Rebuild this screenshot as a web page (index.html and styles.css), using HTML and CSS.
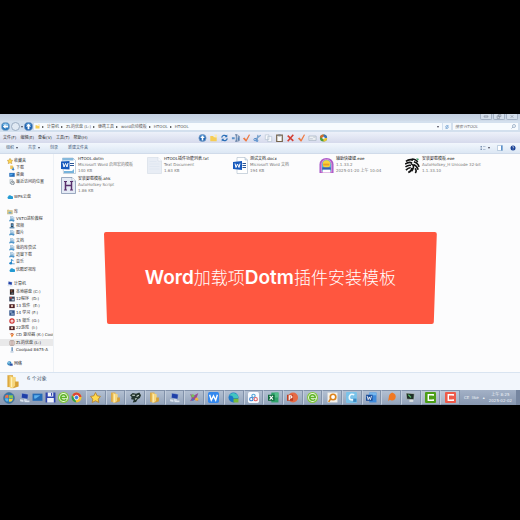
FILE: index.html
```
<!DOCTYPE html>
<html lang="zh-CN">
<head>
    <meta charset="UTF-8">
    <meta name="viewport" content="width=device-width, initial-scale=1.0">
    <title>HTOOL</title>
    <link rel="stylesheet" href="styles.css">
</head>
<body>

    <!-- Shared icons -->
    <svg class="sprite" aria-hidden="true">
        <symbol id="i-back" viewBox="0 0 20 20"><circle cx="10" cy="10" r="9" fill="#2878bd" stroke="#8fb0ce" stroke-width="2"/><path d="M3 7a8 8 0 0 1 14 0z" fill="#8cc5ec"/><path d="M10 5l-6 5 6 5v-3h6V8h-6z" fill="#fff"/></symbol>
        <symbol id="i-up" viewBox="0 0 20 20"><circle cx="10" cy="10" r="9" fill="#1d63b0" stroke="#7d9fc8" stroke-width="2"/><path d="M4 6a8 8 0 0 1 12 0z" fill="#7ebcec"/><path d="M10 4l-6 6h4v6h4v-6h4z" fill="#fff"/></symbol>
        <symbol id="i-folder" viewBox="0 0 20 20"><path d="M2 1h8v17H2z" fill="#dda93f"/><path d="M5 2l9 2v13l-7 3-2-2z" fill="#f6d67c"/><path d="M13 10h5v7l-9 3 4-4z" fill="#d6a136"/><path d="M8 4v14" stroke="#fff3c0" stroke-width="1.5"/></symbol>
        <symbol id="i-new" viewBox="0 0 20 20"><path d="M2 5h7l2 3h7v10H2z" fill="#f6cd55"/><path d="M12 1h7v7h-5z" fill="#fbeab0"/></symbol>
        <symbol id="i-sync" viewBox="0 0 20 20"><path d="M3 9c1-6 8-7 12-4M17 11c-1 6-8 7-12 4" fill="none" stroke="#2c70b8" stroke-width="3"/><path d="M17 1v7h-7zM3 19v-7h7z" fill="#2c70b8"/></symbol>
        <symbol id="i-rename" viewBox="0 0 20 20"><path d="M1 8h7v5H1zM15 8h4v7h-4z" fill="#5b91c8"/><path d="M9 2h6M12 2v16M9 18h6M15 5h4v12h-4" fill="none" stroke="#42658f" stroke-width="2"/></symbol>
        <symbol id="i-check" viewBox="0 0 20 20"><path d="M1 11l4-2 4 5L16 1l3 1-9 17H8z" fill="#ee7a43"/></symbol>
        <symbol id="i-cut" viewBox="0 0 20 20"><path d="M5 13L18 3M9 16l2-14" stroke="#7aa3cc" stroke-width="3"/><circle cx="4" cy="14" r="3" fill="none" stroke="#3d7fc6" stroke-width="2"/><circle cx="9" cy="17" r="2" fill="none" stroke="#3d7fc6" stroke-width="2"/></symbol>
        <symbol id="i-copy" viewBox="0 0 20 20"><path d="M2 2h9v12H2zM8 6h10v13H8z" fill="#f7f9fc" stroke="#aebdcd" stroke-width="1.5"/></symbol>
        <symbol id="i-paste" viewBox="0 0 20 20"><path d="M3 3h14v16H3z" fill="#fafafa" stroke="#75654e" stroke-width="3"/><path d="M7 1h6v5H7z" fill="#80868e"/></symbol>
        <symbol id="i-del" viewBox="0 0 20 20"><path d="M3 4l14 13M17 2L3 18" stroke="#d34035" stroke-width="4"/></symbol>
        <symbol id="i-mail" viewBox="0 0 20 20"><path d="M1 5h18v11H1z" fill="#edf0f3" stroke="#9ba9b8" stroke-width="1.5"/><path d="M12 8h5M3 12h8" stroke="#b6bfcb" stroke-width="2"/></symbol>
        <symbol id="i-win" viewBox="0 0 20 20"><circle cx="10" cy="10" r="9" fill="#2f77b1" stroke="#496986"/><path d="M4 6q3-2 5-1v5q-3-1-6 0z" fill="#ed744b"/><path d="M10 5q3 1 6 0l1 5q-4 1-7 0z" fill="#8ac84e"/><path d="M3 11q3-1 6 0v5q-3-1-4 0z" fill="#5bb7ec"/><path d="M10 11q3 1 7 0l-2 4q-2 2-5 1z" fill="#f7d445"/></symbol>
        <symbol id="i-options" viewBox="0 0 20 20"><circle cx="10" cy="10" r="9" fill="#4d9b3f"/><path d="M10 1a9 9 0 0 1 9 9h-9z" fill="#3e71b9"/><path d="M19 10a9 9 0 0 1-9 9v-9z" fill="#f2c632"/><path d="M10 1a9 9 0 0 0-9 8l9 1z" fill="#d96b2e"/><circle cx="10" cy="10" r="3" fill="#e9edf2"/></symbol>
        <symbol id="i-star" viewBox="0 0 20 20"><path d="M10 1l3 6 6 1-4 5 1 6-6-3-6 3 1-6-4-5 6-1z" fill="#ffd94e" stroke="#b5802a" stroke-width="1.5"/></symbol>
        <symbol id="i-down" viewBox="0 0 20 20"><path d="M4 2h8l2 3v8H4z" fill="#f1c75d"/><path d="M12 8v5H8l6 6 5-6h-3V8z" fill="#3a82c7"/></symbol>
        <symbol id="i-desk" viewBox="0 0 20 20"><path d="M1 3h18v13H1z" fill="#246cb9"/><path d="M4 6h11l-8 6H4z" fill="#5db1ef"/></symbol>
        <symbol id="i-recent" viewBox="0 0 20 20"><path d="M3 1h9v14H3z" fill="#dde5ea" stroke="#7c8a95"/><circle cx="12" cy="13" r="6" fill="#eef4f8" stroke="#50606e" stroke-width="2"/><path d="M12 9v4h4" fill="none" stroke="#333" stroke-width="1.5"/></symbol>
        <symbol id="i-cloud" viewBox="0 0 20 20"><path d="M5 17a5 5 0 0 1-1-9 6 6 0 0 1 11-1 5 5 0 0 1 1 10z" fill="#249bd3"/></symbol>
        <symbol id="i-lib" viewBox="0 0 20 20"><path d="M1 3h6l2 2h9v12H1z" fill="#e7cf83" stroke="#a69155"/><path d="M5 9h10v6H5z" fill="#6ba9d2"/></symbol>
        <symbol id="i-shelf" viewBox="0 0 20 20"><path d="M5 1h7l4 4v9H5z" fill="#e6f1fa" stroke="#5991bd" stroke-width="1.5"/><path d="M1 13q9-5 18 2l-3 4q-8-4-15-1z" fill="#4f96ca"/><path d="M7 6h5M7 9h7" stroke="#3c80b5" stroke-width="1.5"/></symbol>
        <symbol id="i-video" viewBox="0 0 20 20"><path d="M6 1h9v13H6z" fill="#29445e"/><path d="M8 4h5v6H8z" fill="#5c9dcc"/><path d="M2 14h16v4H2z" fill="#477da8"/></symbol>
        <symbol id="i-music" viewBox="0 0 20 20"><path d="M8 1v12M8 2l7 4" stroke="#2386c9" stroke-width="3"/><ellipse cx="6" cy="14" rx="5" ry="4" fill="#2386c9"/><path d="M11 16h8" stroke="#5b9cc9" stroke-width="3"/></symbol>
        <symbol id="i-pc" viewBox="0 0 20 20"><path d="M5 2l12 2-1 9-12-2z" fill="#1e3fa8" stroke="#b6c6dd"/><path d="M9 13h5v3H9zM2 13l6 1v4l-6-1z" fill="#dbe4ee"/><path d="M10 17h9" stroke="#dbe4ee" stroke-width="3"/></symbol>
        <symbol id="i-disk" viewBox="0 0 20 20"><path d="M3 1h14v18H3z" fill="#302421"/><path d="M6 4h5v5H6z" fill="#9a5b43"/><path d="M8 12h7v4H8z" fill="#6f7d8c"/></symbol>
        <symbol id="i-disk2" viewBox="0 0 20 20"><path d="M1 2h18v16H1z" fill="#33435c"/><path d="M3 4h7v4H3z" fill="#cf4d3c"/><path d="M9 9h8v6H9z" fill="#b8c6d8"/></symbol>
        <symbol id="i-disk3" viewBox="0 0 20 20"><path d="M1 4h18v13H1z" fill="#4a1d22"/><circle cx="10" cy="10" r="4" fill="#d8b6a5"/></symbol>
        <symbol id="i-disk4" viewBox="0 0 20 20"><path d="M1 1h18v18H1z" fill="#31548a"/><path d="M3 5h8v3H3zM7 12h9v3H7z" fill="#b9d0e7"/></symbol>
        <symbol id="i-ring" viewBox="0 0 20 20"><circle cx="10" cy="10" r="7" fill="#fff" stroke="#cf302f" stroke-width="4"/><circle cx="10" cy="10" r="2" fill="#cf302f"/></symbol>
        <symbol id="i-cd" viewBox="0 0 20 20"><path d="M1 4l8 5 9-4-5 8-4 5-2-7z" fill="#ee7d27"/><path d="M4 4h11l-5 4z" fill="#aa3e25"/></symbol>
        <symbol id="i-usb" viewBox="0 0 20 20"><rect x="3" y="2" width="14" height="16" rx="3" fill="#f0e9e6" stroke="#907771" stroke-width="2"/><path d="M6 6h8M6 10h8M6 14h8" stroke="#a77e75" stroke-width="2"/></symbol>
        <symbol id="i-phone" viewBox="0 0 20 20"><path d="M8 1h5v12H8z" fill="#6d94bd"/><path d="M5 15h10v3H5z" fill="#94afca"/></symbol>
        <symbol id="i-net" viewBox="0 0 20 20"><circle cx="8" cy="8" r="7" fill="#2c83bd"/><path d="M3 5l5-3 2 5-4 4z" fill="#8bc9e8"/><path d="M9 9h10v7H9z" fill="#2448a0" stroke="#b7c8df"/></symbol>
        <symbol id="i-word" viewBox="0 0 30 34"><path d="M8 1h16l5 5v27H8z" fill="#fff" stroke="#9aacbe"/><path d="M24 1v5h5" fill="#dbe5ef" stroke="#9aacbe"/><path d="M19 13h7M19 17h7M19 21h7" stroke="#2b5797" stroke-width="2"/><path d="M0 10l18-2v18L0 24z" fill="#185abd"/><path d="M4 13l2 8 3-7 3 7 2-8" fill="none" stroke="#fff" stroke-width="2"/></symbol>
        <symbol id="i-dotm" viewBox="0 0 30 34"><path d="M3 2h21l5 5v26H5z" fill="#fff" stroke="#8da7be"/><path d="M3 2h22v5H3z" fill="#86b9dc"/><path d="M18 13h8M18 17h8" stroke="#2b5797" stroke-width="2"/><path d="M6 28h16l4-4v8H6z" fill="#76b3dc"/><path d="M0 9l17-1v17L0 24z" fill="#185abd"/><path d="M4 12l2 8 3-7 3 7 2-8" fill="none" stroke="#fff" stroke-width="2"/></symbol>
        <symbol id="i-txt" viewBox="0 0 30 34"><path d="M1 1h21l7 7v25H1z" fill="#e8edf5" stroke="#ccd5e1"/><path d="M22 1v7h7" fill="#fafcff" stroke="#ccd5e1"/><path d="M5 9h14M5 14h20M5 19h20M5 24h20" stroke="#d8e1ed"/></symbol>
        <symbol id="i-ahk" viewBox="0 0 30 34"><path d="M1 1h21l7 7v25H1z" fill="#e4eaf5" stroke="#7f90ac" stroke-width="1.5"/><path d="M22 1v7h7" fill="#fff" stroke="#7f90ac"/><path d="M9 9v17M21 9v17M9 17h12" stroke="#572f6c" stroke-width="3"/><path d="M6 9h6M18 9h6M6 26h6M18 26h6" stroke="#572f6c" stroke-width="2"/></symbol>
        <symbol id="i-arch" viewBox="0 0 32 34"><path d="M1 33V15Q2 1 16 1t15 14v18z" fill="#a85bca"/><path d="M5 31V15Q7 4 16 4t11 11v16z" fill="#57b5d7" stroke="#e58cd2" stroke-width="2"/><circle cx="16" cy="14" r="8" fill="#f7d43e"/><path d="M9 13h13v4H9z" fill="#ed9d27"/><path d="M7 21h18v5H7z" fill="#375fb2"/><path d="M8 26h16v6H8z" fill="#fff"/></symbol>
        <symbol id="i-lion" viewBox="0 0 32 34"><path d="M2 8Q10 2 17 6M0 14Q9 8 15 12M1 20Q8 15 13 17M2 27Q8 21 12 22M7 32Q14 29 15 22M14 3Q24 3 27 10M19 9Q28 12 30 20M18 15Q26 18 28 26M21 23Q26 27 22 33M13 13q6 3 5 8t-4 8" fill="none" stroke="#111" stroke-width="3.4"/><path d="M24 1l6 2-3 4z" fill="#3f9d6a"/></symbol>
        <symbol id="i-save" viewBox="0 0 20 20"><path d="M1 1h18v18H1z" fill="#2d43ad"/><path d="M5 1h10v7H5zM4 11h12v8H4z" fill="#f0f3fb"/><path d="M11 2h2v5h-2z" fill="#2d43ad"/></symbol>
        <symbol id="i-e" viewBox="0 0 20 20"><circle cx="10" cy="10" r="9" fill="#f1fae9" stroke="#80c63b" stroke-width="2"/><path d="M5 10h10q0-5-5-5t-5 5 5 5q3 0 5-2" fill="none" stroke="#5cb227" stroke-width="2.6"/></symbol>
        <symbol id="i-chrome" viewBox="0 0 20 20"><circle cx="10" cy="10" r="9" fill="#f4c52f"/><path d="M2 6a9 9 0 0 1 17 3h-9z" fill="#db4437"/><path d="M2 6l5 7 3 6A9 9 0 0 1 2 6z" fill="#2f9e55"/><circle cx="10" cy="10" r="4" fill="#3d7de4" stroke="#fff" stroke-width="1.5"/></symbol>
        <symbol id="i-bird" viewBox="0 0 20 20"><path d="M0 6l5-4 6 1 6-2 3 5-2 5-4 2-3 5-6 1 2-5-5-1 1-4z" fill="#24352f"/><path d="M4 6l5 0M12 8l4-2M9 13l3-1" stroke="#d9e6dc" stroke-width="2"/></symbol>
        <symbol id="i-paint" viewBox="0 0 20 20"><path d="M2 4l8 2 7-4-3 8 3 7-7-3-8 3 3-6z" fill="#9b4b91"/><circle cx="7" cy="7" r="3" fill="#77c157"/><circle cx="14" cy="13" r="3" fill="#efb840"/><circle cx="7" cy="14" r="2" fill="#3f75c2"/></symbol>
        <symbol id="i-wps" viewBox="0 0 20 20"><rect width="20" height="20" rx="3" fill="#3488ee"/><path d="M3 5l3 10 4-8 4 8 3-10" fill="none" stroke="#fff" stroke-width="2.5"/></symbol>
        <symbol id="i-edge" viewBox="0 0 20 20"><circle cx="10" cy="10" r="9" fill="#1c78c8"/><path d="M2 7a9 9 0 0 1 17 4h-9q-2-6-8-4z" fill="#43c5bf"/><path d="M10 12h9v7h-9z" fill="#79bb3a"/></symbol>
        <symbol id="i-pan" viewBox="0 0 20 20"><rect width="20" height="20" rx="3" fill="#f8fbff"/><circle cx="10" cy="7" r="3" fill="none" stroke="#52a4d8" stroke-width="2"/><circle cx="6" cy="13" r="3" fill="none" stroke="#3d83d0" stroke-width="2"/><circle cx="14" cy="13" r="3" fill="none" stroke="#e46265" stroke-width="2"/></symbol>
        <symbol id="i-excel" viewBox="0 0 20 20"><path d="M6 1h13v18H6z" fill="#2fa36a"/><path d="M12 1h7v9h-7z" fill="#53bd88"/><path d="M0 5h12v11H0z" fill="#0f6a3c"/><path d="M3 7l6 7M9 7l-6 7" stroke="#fff" stroke-width="2"/></symbol>
        <symbol id="i-ppt" viewBox="0 0 20 20"><circle cx="11" cy="10" r="9" fill="#e66a45"/><path d="M0 5h11v11H0z" fill="#bd3d20"/><path d="M4 15V7h3q2 0 2 2t-5 2" fill="none" stroke="#fff" stroke-width="2"/></symbol>
        <symbol id="i-find" viewBox="0 0 20 20"><path d="M1 1h18v18H1z" fill="#f4f1eb"/><circle cx="11" cy="9" r="5" fill="#fff" stroke="#db831c" stroke-width="3"/><path d="M7 12l-4 6" stroke="#db831c" stroke-width="3"/></symbol>
        <symbol id="i-c" viewBox="0 0 20 20"><rect width="20" height="20" rx="2" fill="#7ac2e9"/><path d="M15 5q-8-3-9 4t9 5" fill="none" stroke="#eefaff" stroke-width="3"/><path d="M13 12h6v6h-6z" fill="#3c8ac3"/></symbol>
        <symbol id="i-wordapp" viewBox="0 0 20 20"><path d="M6 1h13v18H6z" fill="#3e8adb"/><path d="M6 1h13v5H6z" fill="#78b8ee"/><path d="M0 5h12v11H0z" fill="#184b99"/><path d="M2 7l2 7 2-5 2 5 2-7" fill="none" stroke="#fff" stroke-width="1.5"/></symbol>
        <symbol id="i-flame" viewBox="0 0 20 20"><path d="M11 1q9 3 6 11-3 6-10 2l-3 3 1-7q0-6 6-9z" fill="#f07823"/></symbol>
        <symbol id="i-mon" viewBox="0 0 20 20"><path d="M2 2l15 1-1 11-13-1z" fill="#1f3027" stroke="#ccd3d1"/><path d="M6 5l5 5" stroke="#57bd68" stroke-width="2"/><path d="M8 14h7v4H8z" fill="#dce1e0"/></symbol>
        <symbol id="i-cam" viewBox="0 0 20 20"><rect width="20" height="20" rx="2" fill="currentColor"/><path d="M15 7V5H6v10h9v-2" fill="none" stroke="#fff" stroke-width="2.6"/></symbol>
    </svg>

    <div class="desktop">
        <main class="window">
            <header class="titlebar">
                <button class="win-btn" aria-label="最小化"><svg viewBox="0 0 10 8"><path d="M2 3h6v2H2z"/></svg></button>
                <button class="win-btn" aria-label="还原"><svg viewBox="0 0 10 8"><path d="M4 1h4v3H4zM2 3h4v4H2z"/></svg></button>
                <button class="win-btn" aria-label="关闭"><svg viewBox="0 0 10 8"><path d="M3 2l4 4M7 2L3 6"/></svg></button>
            </header>

            <nav class="address">
                <button class="round" aria-label="后退"><svg><use href="#i-back"/></svg></button>
                <button class="round forward" aria-label="前进"></button>
                <span class="caret"></span>
                <button class="round" aria-label="向上"><svg><use href="#i-up"/></svg></button>
                <div class="path">
                    <svg class="path-icon"><use href="#i-new"/></svg>
                    <a href="#">计算机</a>
                    <a href="#">ZL的优盘 (L:)</a>
                    <a href="#">便携工具</a>
                    <a href="#">word启动模板</a>
                    <a href="#">HTOOL</a>
                    <a href="#">HTOOL</a>
                    <span class="caret path-caret"></span>
                </div>
                <button class="refresh" aria-label="刷新"><svg><use href="#i-sync"/></svg></button>
                <div class="search">
                    <input type="text" placeholder="搜索 HTOOL" aria-label="搜索 HTOOL">
                    <svg viewBox="0 0 10 10"><circle cx="6" cy="4" r="3"/><path d="M4 6L1 9"/></svg>
                </div>
            </nav>

            <div class="menubar">
                <div class="menus">
                    <button>文件(F)</button>
                    <button>编辑(E)</button>
                    <button>查看(V)</button>
                    <button>工具(T)</button>
                    <button>帮助(H)</button>
                </div>
                <div class="tools">
                    <button aria-label="向上"><svg><use href="#i-up"/></svg></button>
                    <button aria-label="新建"><svg><use href="#i-new"/></svg></button>
                    <button aria-label="刷新"><svg><use href="#i-sync"/></svg></button>
                    <button aria-label="重命名"><svg><use href="#i-rename"/></svg></button>
                    <button aria-label="全选"><svg><use href="#i-check"/></svg></button>
                    <button aria-label="剪切"><svg><use href="#i-cut"/></svg></button>
                    <button aria-label="复制"><svg><use href="#i-copy"/></svg></button>
                    <button aria-label="粘贴"><svg><use href="#i-paste"/></svg></button>
                    <button aria-label="删除"><svg><use href="#i-del"/></svg></button>
                    <button aria-label="确定"><svg><use href="#i-check"/></svg></button>
                    <button aria-label="属性"><svg><use href="#i-mail"/></svg></button>
                    <button aria-label="选项"><svg><use href="#i-options"/></svg></button>
                </div>
            </div>

            <div class="toolbar">
                <button>组织<span class="caret"></span></button>
                <button>共享<span class="caret"></span></button>
                <button>刻录</button>
                <button>新建文件夹</button>
                <div class="views">
                    <button aria-label="更改视图"><svg viewBox="0 0 12 12"><path d="M1 2h3v3H1zM1 7h3v3H1zM6 3h5v1H6zM6 8h5v1H6z" fill="#7e94b2"/></svg><span class="caret"></span></button>
                    <button aria-label="预览窗格"><svg viewBox="0 0 12 12"><path d="M1 1h10v10H1z" fill="#fff" stroke="#89a6c7"/><path d="M8 1h3v10H8z" fill="#5b91cc"/></svg></button>
                    <button aria-label="帮助"><svg viewBox="0 0 12 12"><circle cx="6" cy="6" r="5" fill="#173f94"/><path d="M4 4q2-2 4 0 0 1-2 2v1M6 8v1" stroke="#fff" fill="none"/></svg></button>
                </div>
            </div>

            <div class="content">
                <!-- Navigation pane -->
                <ul class="sidebar">
                    <li class="root"><svg><use href="#i-star"/></svg><a href="#">收藏夹</a></li>
                    <li><svg><use href="#i-down"/></svg><a href="#">下载</a></li>
                    <li><svg><use href="#i-desk"/></svg><a href="#">桌面</a></li>
                    <li><svg><use href="#i-recent"/></svg><a href="#">最近访问的位置</a></li>
                    <li class="space"></li>
                    <li class="root"><svg><use href="#i-cloud"/></svg><a href="#">WPS云盘</a></li>
                    <li class="space"></li>
                    <li class="root"><svg><use href="#i-lib"/></svg><a href="#">库</a></li>
                    <li><svg><use href="#i-shelf"/></svg><a href="#">VSTO进阶教程</a></li>
                    <li><svg><use href="#i-video"/></svg><a href="#">视频</a></li>
                    <li><svg><use href="#i-shelf"/></svg><a href="#">图片</a></li>
                    <li><svg><use href="#i-shelf"/></svg><a href="#">文档</a></li>
                    <li><svg><use href="#i-shelf"/></svg><a href="#">我的库尝试</a></li>
                    <li><svg><use href="#i-shelf"/></svg><a href="#">迅雷下载</a></li>
                    <li><svg><use href="#i-music"/></svg><a href="#">音乐</a></li>
                    <li><svg><use href="#i-cloud"/></svg><a href="#">优酷影视库</a></li>
                    <li class="space"></li>
                    <li class="root"><svg><use href="#i-pc"/></svg><a href="#">计算机</a></li>
                    <li><svg><use href="#i-disk"/></svg><a href="#">本地磁盘 (C:)</a></li>
                    <li><svg><use href="#i-disk2"/></svg><a href="#">12程序&nbsp; (D:)</a></li>
                    <li><svg><use href="#i-disk3"/></svg><a href="#">13 软件&nbsp; (E:)</a></li>
                    <li><svg><use href="#i-disk4"/></svg><a href="#">14 学习 (F:)</a></li>
                    <li><svg><use href="#i-ring"/></svg><a href="#">15 娱乐 (G:)</a></li>
                    <li><svg><use href="#i-disk3"/></svg><a href="#">22游戏&nbsp; (I:)</a></li>
                    <li><svg><use href="#i-cd"/></svg><a href="#">CD 驱动器 (K:) Cool</a></li>
                    <li class="selected"><svg><use href="#i-usb"/></svg><a href="#">ZL的优盘 (L:)</a></li>
                    <li><svg><use href="#i-phone"/></svg><a href="#">Coolpad 8675-A</a></li>
                    <li class="space"></li>
                    <li class="root"><svg><use href="#i-net"/></svg><a href="#">网络</a></li>
                </ul>

                <!-- File list -->
                <div class="files">
                    <div class="file">
                        <svg><use href="#i-dotm"/></svg>
                        <div><p class="name">HTOOL.dotm</p><p>Microsoft Word 启用宏的模板</p><p>140 KB</p></div>
                    </div>
                    <div class="file">
                        <svg><use href="#i-txt"/></svg>
                        <div><p class="name">HTOOL插件功能列表.txt</p><p>Text Document</p><p>1.63 KB</p></div>
                    </div>
                    <div class="file">
                        <svg><use href="#i-word"/></svg>
                        <div><p class="name">测试文档.docx</p><p>Microsoft Word 文档</p><p>194 KB</p></div>
                    </div>
                    <div class="file">
                        <svg><use href="#i-arch"/></svg>
                        <div><p class="name">辅助快捷键.exe</p><p>1.1.33.2</p><p>2025-01-20 上午 10:04</p></div>
                    </div>
                    <div class="file">
                        <svg><use href="#i-lion"/></svg>
                        <div><p class="name">安装卸载模板.exe</p><p>AutoHotkey_H Unicode 32-bit</p><p>1.1.33.10</p></div>
                    </div>
                    <div class="file">
                        <svg><use href="#i-ahk"/></svg>
                        <div><p class="name">安装卸载模板.ahk</p><p>AutoHotkey Script</p><p>1.86 KB</p></div>
                    </div>
                </div>

                <!-- Title card over the window -->
                <div class="banner">
                    <svg class="banner-shape" viewBox="0 0 334 92" preserveAspectRatio="none"><path d="M2 0H332Q334 0 334 2L331 90Q331 92 329 92H5Q3 92 3 90L0 2Q0 0 2 0Z" fill="#ff563f"/></svg>
                    <h1><b>Word</b>加载项<b>Dotm</b>插件安装模板</h1>
                </div>
            </div>

            <div class="details">
                <svg><use href="#i-folder"/></svg>
                <p>6 个对象</p>
            </div>

            <footer class="taskbar">
                <div class="quick">
                    <button class="start" aria-label="开始"><svg><use href="#i-win"/></svg></button>
                    <button aria-label="计算机"><svg><use href="#i-pc"/></svg></button>
                    <button aria-label="桌面"><svg><use href="#i-desk"/></svg></button>
                    <button aria-label="保存"><svg><use href="#i-save"/></svg></button>
                    <button aria-label="浏览器"><svg><use href="#i-e"/></svg></button>
                    <button aria-label="Chrome"><svg><use href="#i-chrome"/></svg></button>
                </div>
                <div class="tasks">
                    <button aria-label="收藏"><svg><use href="#i-star"/></svg></button>
                    <button aria-label="文件夹"><svg><use href="#i-folder"/></svg></button>
                    <button aria-label="工具"><svg><use href="#i-bird"/></svg></button>
                    <button aria-label="文件夹"><svg><use href="#i-folder"/></svg></button>
                    <button aria-label="计算机"><svg><use href="#i-pc"/></svg></button>
                    <button aria-label="画图"><svg><use href="#i-paint"/></svg></button>
                    <button aria-label="WPS"><svg><use href="#i-wps"/></svg></button>
                    <button aria-label="Edge"><svg><use href="#i-edge"/></svg></button>
                    <button aria-label="网盘"><svg><use href="#i-pan"/></svg></button>
                    <button aria-label="Excel"><svg><use href="#i-excel"/></svg></button>
                    <button aria-label="PowerPoint"><svg><use href="#i-ppt"/></svg></button>
                    <button aria-label="浏览器"><svg><use href="#i-e"/></svg></button>
                    <button aria-label="搜索"><svg><use href="#i-find"/></svg></button>
                    <button aria-label="C"><svg><use href="#i-c"/></svg></button>
                    <button aria-label="Word"><svg><use href="#i-wordapp"/></svg></button>
                    <button aria-label="火焰"><svg><use href="#i-flame"/></svg></button>
                    <button aria-label="监视器"><svg><use href="#i-mon"/></svg></button>
                    <button class="green" aria-label="Camtasia"><svg><use href="#i-cam"/></svg></button>
                    <button class="red" aria-label="录制"><svg><use href="#i-cam"/></svg></button>
                </div>
                <div class="tray">
                    <span class="lang">CE &nbsp;like</span>
                    <span class="lang">▴</span>
                    <p class="clock">上午 8:25<br>2025-02-02</p>
                </div>
            </footer>
        </main>
    </div>

</body>
</html>
```
FILE: styles.css
```
* {
    margin: 0;
    padding: 0;
    box-sizing: border-box;
}

body {
    background-color: #000;
    color: #333;
    font-family: "DejaVu Sans", "Noto Sans CJK SC", sans-serif;
    font-size: 4px;
    line-height: 6px;
}

button {
    display: flex;
    align-items: center;
    justify-content: center;
    border: none;
    background: none;
    color: inherit;
    font: inherit;
    white-space: nowrap;
}

a {
    color: inherit;
    text-decoration: none;
    white-space: nowrap;
}

svg {
    display: block;
    flex-shrink: 0;
}

.sprite {
    display: none;
}

.desktop {
    display: flex;
    align-items: center;
    min-height: 100vh;
    padding-bottom: 1px;
}

.window {
    width: 100%;
    background-color: #fcfcfd;
}

.caret {
    border: 1px solid transparent;
    border-top: 2px solid #445;
    border-bottom: none;
}

/* Title bar */
.titlebar {
    display: flex;
    justify-content: flex-end;
    gap: 1px;
    height: 7px;
    padding-right: 2px;
    background: linear-gradient(#c3cfe0, #cfdbe9);
}

.win-btn {
    width: 12px;
    height: 6px;
    border: 1px solid #a3b1c4;
    border-top: none;
    border-radius: 0 0 2px 2px;
    background-color: #d3deeb;
}

.win-btn svg {
    width: 8px;
    height: 5px;
    fill: none;
    stroke: #7e8998;
}

/* Address bar */
.address {
    display: flex;
    align-items: center;
    gap: 1px;
    height: 11px;
    padding: 0 2px 0 1px;
    background-color: #d3e0ee;
}

.round,
.round svg {
    width: 9px;
    height: 9px;
}

.forward {
    border: 1px solid #9caec3;
    border-radius: 50%;
    background-color: #e0e9f3;
}

.path {
    display: flex;
    align-items: center;
    flex: 1;
    height: 7px;
    padding-left: 1px;
    background-color: #f7fbfe;
    color: #555;
}

.path-icon {
    width: 5px;
    height: 5px;
}

.path a {
    display: flex;
    align-items: center;
}

.path a::before {
    content: "";
    margin: 0 3px 0 2px;
    border: 1px solid transparent;
    border-left: 2px solid #333;
    border-right: none;
}

.path-caret {
    margin: 0 3px 0 auto;
}

.refresh {
    width: 8px;
    height: 7px;
    background-color: #f1f7fc;
}

.refresh svg {
    width: 4px;
    height: 4px;
}

.search {
    display: flex;
    align-items: center;
    width: 65px;
    height: 7px;
    margin-left: 1px;
    padding: 0 2px;
    background-color: #f7fbfe;
}

.search input {
    flex: 1;
    min-width: 0;
    height: 6px;
    border: none;
    background: none;
    font: inherit;
    font-style: italic;
}

.search input::placeholder {
    color: #777;
}

.search svg {
    width: 5px;
    height: 5px;
    fill: none;
    stroke: #5d7da0;
}

/* Menu bar */
.menubar {
    display: flex;
    align-items: center;
    height: 11px;
    background: linear-gradient(#edf1fa, #d6daec);
}

.menus {
    display: flex;
    gap: 4px;
    width: 198px;
    padding-left: 3px;
}

.tools {
    display: flex;
    gap: 2px;
}

.tools svg {
    width: 9px;
    height: 8px;
}

/* Command bar */
.toolbar {
    display: flex;
    align-items: center;
    gap: 10px;
    height: 10px;
    padding: 0 4px 0 6px;
    background: linear-gradient(#f2f7fd, #dce7f4);
    color: #3f5876;
}

.toolbar .caret {
    margin-left: 2px;
}

.views {
    display: flex;
    gap: 7px;
    margin-left: auto;
}

.views svg {
    width: 6px;
    height: 6px;
}

/* Explorer body */
.content {
    display: flex;
    position: relative;
    height: 219px;
    border-top: 1px solid #d0dbea;
}

.sidebar {
    display: grid;
    grid-auto-rows: 1fr;
    flex-shrink: 0;
    width: 54px;
    padding: 3px 0 4px;
    border-right: 1px solid #edf1f6;
    list-style: none;
    overflow: hidden;
}

.sidebar li {
    display: flex;
    align-items: center;
    gap: 1px;
    padding-left: 9px;
}

.sidebar .root {
    padding-left: 7px;
}

.sidebar svg {
    width: 6px;
    height: 6px;
}

.sidebar .selected {
    background-color: #e9e9ea;
}

.files {
    display: grid;
    grid-template-columns: repeat(auto-fill, 86px);
    align-content: start;
    flex: 1;
    row-gap: 2px;
    padding: 2px 0 0 7px;
}

.file {
    display: flex;
    align-items: center;
    gap: 2px;
    color: #777;
    white-space: nowrap;
}

.file svg {
    width: 15px;
    height: 17px;
}

.file .name {
    color: #222;
}

.banner {
    display: flex;
    align-items: center;
    justify-content: center;
    position: absolute;
    top: 36%;
    left: 20%;
    width: 64%;
    height: 92px;
}

.banner-shape {
    position: absolute;
    width: 100%;
    height: 100%;
}

.banner h1 {
    position: relative;
    color: #fff;
    font-family: Inter, "Noto Sans CJK SC", sans-serif;
    font-size: 17px;
    font-weight: 300;
    line-height: 24px;
    white-space: nowrap;
}

.banner b {
    font-size: 19px;
    font-weight: 600;
}

/* Details pane */
.details {
    display: flex;
    gap: 7px;
    height: 18px;
    padding: 1px 6px;
    border-top: 1px solid #d9e4f1;
    background-color: #f2f6fc;
    color: #4a5a70;
    font-size: 5px;
    line-height: 8px;
}

.details svg {
    width: 14px;
    height: 15px;
}

/* Taskbar */
.taskbar {
    display: flex;
    height: 15px;
    background: linear-gradient(#a3b1c6, #8797b0);
}

.taskbar svg {
    width: 11px;
    height: 11px;
}

.quick {
    display: flex;
    gap: 2px;
    width: 86px;
    padding-left: 3px;
}

.quick .start {
    margin-right: 2px;
}

.quick .start svg {
    width: 12px;
    height: 12px;
}

.tasks {
    display: flex;
    flex: 1;
}

.tasks button {
    flex: 1;
    border: 1px solid #8292aa;
    border-left-color: #c3cedd;
    background: linear-gradient(#b3c0d2, #94a4bb);
}

.green {
    color: #4c9e18;
}

.red {
    color: #ee5a4a;
}

.tasks .green,
.tasks .red {
    background: linear-gradient(#c0cad8, #a3b0c3);
}

.tray {
    display: flex;
    align-items: center;
    justify-content: flex-end;
    gap: 4px;
    width: 60px;
    padding-right: 4px;
    border-right: 4px solid #7686a0;
    color: #eef2f7;
}

.lang {
    white-space: nowrap;
}

.clock {
    text-align: center;
    white-space: nowrap;
}
```
